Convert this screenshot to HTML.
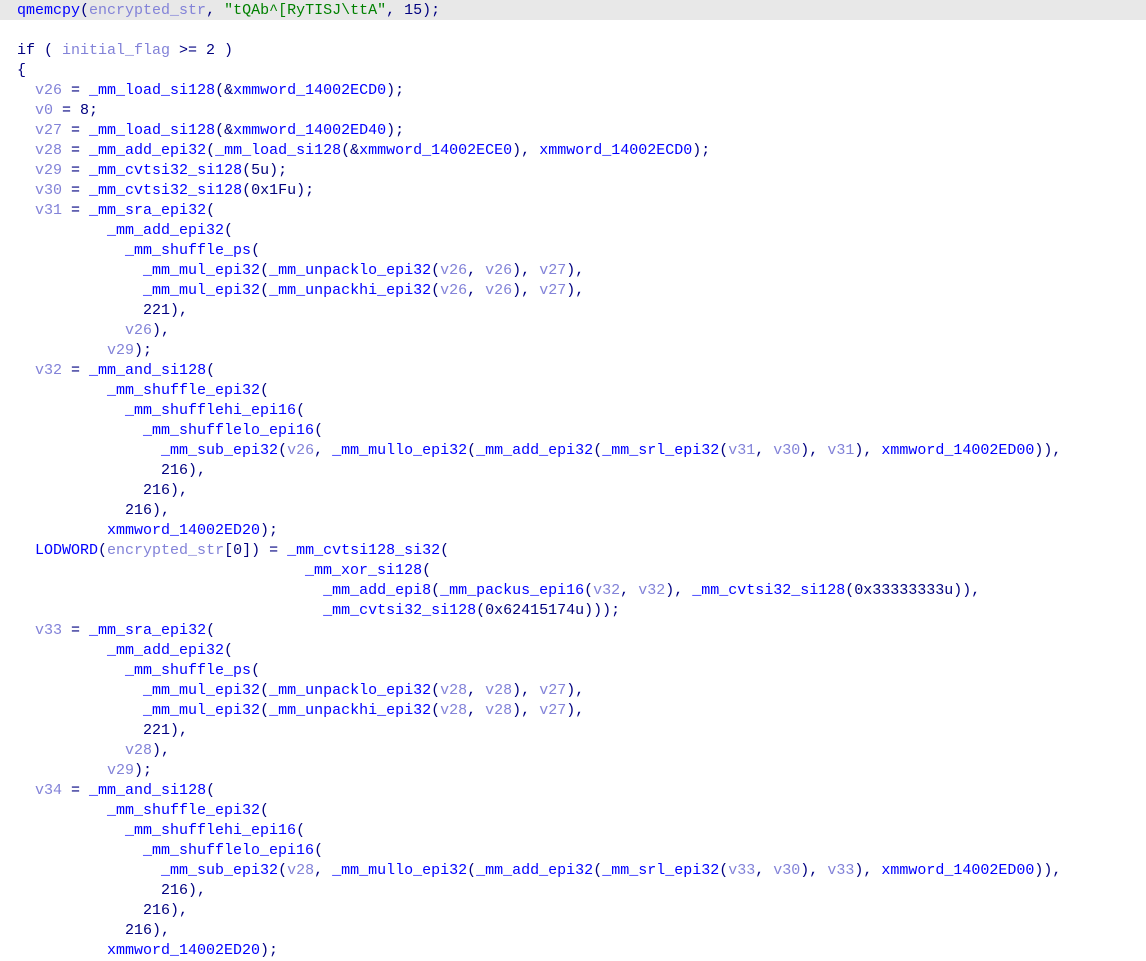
<!DOCTYPE html>
<html><head><meta charset="utf-8"><style>
body{margin:0;background:#fff;width:1146px;height:960px;overflow:hidden;position:relative}
.hl{position:absolute;left:0;top:0;width:1146px;height:20px;background:#e8e8e8}
pre{position:relative;margin:0;padding:1px 0 0 17px;font-family:"Liberation Mono",monospace;font-size:15px;line-height:20px;color:#000080}
i{font-style:normal;color:#8282d8}
b{font-weight:normal;color:#0000ff}
s{text-decoration:none;color:#008000}
</style></head><body><div class="hl"></div><pre><b>qmemcpy</b>(<i>encrypted_str</i>, <s>"tQAb^[RyTISJ\ttA"</s>, 15);

if ( <i>initial_flag</i> &gt;= 2 )
{
  <i>v26</i> = <b>_mm_load_si128</b>(&amp;<b>xmmword_14002ECD0</b>);
  <i>v0</i> = 8;
  <i>v27</i> = <b>_mm_load_si128</b>(&amp;<b>xmmword_14002ED40</b>);
  <i>v28</i> = <b>_mm_add_epi32</b>(<b>_mm_load_si128</b>(&amp;<b>xmmword_14002ECE0</b>), <b>xmmword_14002ECD0</b>);
  <i>v29</i> = <b>_mm_cvtsi32_si128</b>(5u);
  <i>v30</i> = <b>_mm_cvtsi32_si128</b>(0x1Fu);
  <i>v31</i> = <b>_mm_sra_epi32</b>(
          <b>_mm_add_epi32</b>(
            <b>_mm_shuffle_ps</b>(
              <b>_mm_mul_epi32</b>(<b>_mm_unpacklo_epi32</b>(<i>v26</i>, <i>v26</i>), <i>v27</i>),
              <b>_mm_mul_epi32</b>(<b>_mm_unpackhi_epi32</b>(<i>v26</i>, <i>v26</i>), <i>v27</i>),
              221),
            <i>v26</i>),
          <i>v29</i>);
  <i>v32</i> = <b>_mm_and_si128</b>(
          <b>_mm_shuffle_epi32</b>(
            <b>_mm_shufflehi_epi16</b>(
              <b>_mm_shufflelo_epi16</b>(
                <b>_mm_sub_epi32</b>(<i>v26</i>, <b>_mm_mullo_epi32</b>(<b>_mm_add_epi32</b>(<b>_mm_srl_epi32</b>(<i>v31</i>, <i>v30</i>), <i>v31</i>), <b>xmmword_14002ED00</b>)),
                216),
              216),
            216),
          <b>xmmword_14002ED20</b>);
  <b>LODWORD</b>(<i>encrypted_str</i>[0]) = <b>_mm_cvtsi128_si32</b>(
                                <b>_mm_xor_si128</b>(
                                  <b>_mm_add_epi8</b>(<b>_mm_packus_epi16</b>(<i>v32</i>, <i>v32</i>), <b>_mm_cvtsi32_si128</b>(0x33333333u)),
                                  <b>_mm_cvtsi32_si128</b>(0x62415174u)));
  <i>v33</i> = <b>_mm_sra_epi32</b>(
          <b>_mm_add_epi32</b>(
            <b>_mm_shuffle_ps</b>(
              <b>_mm_mul_epi32</b>(<b>_mm_unpacklo_epi32</b>(<i>v28</i>, <i>v28</i>), <i>v27</i>),
              <b>_mm_mul_epi32</b>(<b>_mm_unpackhi_epi32</b>(<i>v28</i>, <i>v28</i>), <i>v27</i>),
              221),
            <i>v28</i>),
          <i>v29</i>);
  <i>v34</i> = <b>_mm_and_si128</b>(
          <b>_mm_shuffle_epi32</b>(
            <b>_mm_shufflehi_epi16</b>(
              <b>_mm_shufflelo_epi16</b>(
                <b>_mm_sub_epi32</b>(<i>v28</i>, <b>_mm_mullo_epi32</b>(<b>_mm_add_epi32</b>(<b>_mm_srl_epi32</b>(<i>v33</i>, <i>v30</i>), <i>v33</i>), <b>xmmword_14002ED00</b>)),
                216),
              216),
            216),
          <b>xmmword_14002ED20</b>);
</pre></body></html>
